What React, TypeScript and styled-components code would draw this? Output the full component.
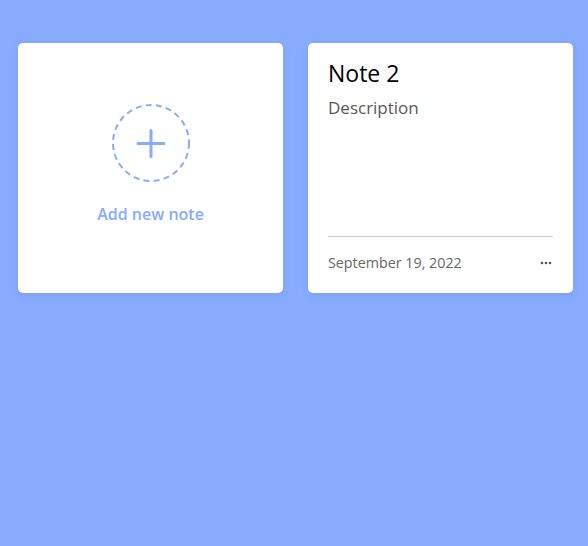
import React from "react";
import styled, { createGlobalStyle } from "styled-components";

const GlobalStyle = createGlobalStyle`
  html, body {
    margin: 0;
    padding: 0;
    background: #88aaff;
    font-family: "Open Sans", "Noto Sans", sans-serif;
  }
  #root {
    min-height: 100vh;
  }
`;

const Page = styled.main`
  min-height: 100vh;
  box-sizing: border-box;
  background: #88aaff;
  padding: 43px 15px 0 18px;
`;

const Grid = styled.div`
  display: grid;
  grid-template-columns: repeat(auto-fill, 265px);
  gap: 25px;
`;

const Card = styled.div`
  height: 250px;
  box-sizing: border-box;
  background: #ffffff;
  border-radius: 5px;
  box-shadow: 0 3px 8px rgba(40, 60, 120, 0.08);
`;

const AddCard = styled(Card)`
  display: flex;
  flex-direction: column;
  align-items: center;
  justify-content: center;
  gap: 20px;
  padding-bottom: 6px;
  cursor: pointer;
`;

const AddCircle = styled.svg`
  display: block;
  width: 78px;
  height: 78px;
`;

const AddLabel = styled.span`
  font-size: 16px;
  line-height: 24px;
  font-weight: 600;
  color: #88aaff;
`;

const NoteCard = styled(Card)`
  display: flex;
  flex-direction: column;
  padding: 17px 20px 19px;
`;

const Title = styled.h2`
  margin: 0;
  font-size: 23px;
  line-height: 26px;
  font-weight: 500;
  color: #000;
`;

const Description = styled.p`
  margin: 10px 0 0;
  font-size: 17px;
  line-height: 24px;
  font-weight: 400;
  color: #575757;
`;

const Footer = styled.div`
  margin-top: auto;
  border-top: 1px solid #cccccc;
  padding-top: 15px;
  display: flex;
  align-items: center;
  justify-content: space-between;
`;

const DateText = styled.span`
  font-size: 14.3px;
  line-height: 22px;
  color: #666666;
`;

const MoreButton = styled.button`
  border: none;
  background: transparent;
  padding: 0;
  margin-right: 1px;
  display: flex;
  align-items: center;
  cursor: pointer;
`;

export default function App() {
  return (
    <>
      <GlobalStyle />
      <Page>
        <Grid>
          <AddCard>
            <AddCircle viewBox="0 0 78 78">
              <circle
                cx="39"
                cy="39"
                r="38"
                fill="none"
                stroke="#88aaff"
                strokeWidth="2"
                strokeDasharray="6 4.2"
              />
              <path
                d="M39 26.5v26M26 39.5h26"
                stroke="#88aaff"
                strokeWidth="3"
                strokeLinecap="round"
              />
            </AddCircle>
            <AddLabel>Add new note</AddLabel>
          </AddCard>
          <NoteCard>
            <Title>Note 2</Title>
            <Description>Description</Description>
            <Footer>
              <DateText>September 19, 2022</DateText>
              <MoreButton aria-label="More">
                <svg width="12" height="4" viewBox="0 0 12 4">
                  <circle cx="2" cy="2" r="1.3" fill="#555" />
                  <circle cx="6" cy="2" r="1.3" fill="#555" />
                  <circle cx="10" cy="2" r="1.3" fill="#555" />
                </svg>
              </MoreButton>
            </Footer>
          </NoteCard>
        </Grid>
      </Page>
    </>
  );
}
